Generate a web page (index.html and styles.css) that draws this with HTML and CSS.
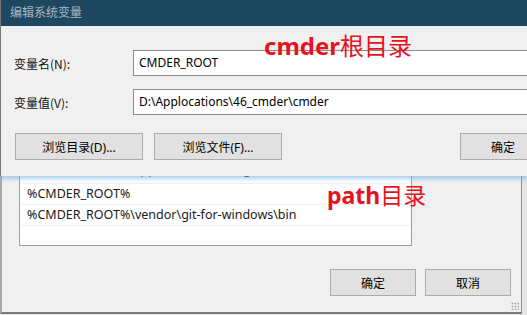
FILE: index.html
```html
<!DOCTYPE html>
<html lang="zh-CN">
<head>
<meta charset="utf-8">
<title>编辑系统变量</title>
<link rel="stylesheet" href="styles.css">
</head>
<body>
<div class="screen">
  <div class="win back">
    <div class="list">
      <div class="row empty"></div>
      <div class="row partial">%USERPROFILE%\AppData\Local\Programs\</div>
      <div class="row">%CMDER_ROOT%</div>
      <div class="row">%CMDER_ROOT%\vendor\git-for-windows\bin</div>
      <div class="row empty last"></div>
    </div>
    <div class="actions">
      <button class="btn">确定</button>
      <button class="btn">取消</button>
    </div>
    <div class="grip"></div>
  </div>

  <div class="win front">
    <div class="titlebar">编辑系统变量</div>
    <div class="body">
      <div class="field">
        <label class="lbl">变量名(N):</label>
        <div class="input">CMDER_ROOT</div>
      </div>
      <div class="field">
        <label class="lbl">变量值(V):</label>
        <div class="input">D:\Applocations\46_cmder\cmder</div>
      </div>
      <div class="btnrow">
        <button class="btn wide">浏览目录(D)...</button>
        <button class="btn wide">浏览文件(F)...</button>
        <button class="btn ok">确定</button>
      </div>
    </div>
  </div>

  <div class="note note-cmder"><span class="lat">cmder</span>根目录</div>
  <div class="note note-path"><span class="lat">path</span>目录</div>
</div>
</body>
</html>
```
FILE: styles.css
```css
* { box-sizing: border-box; }
html, body { margin: 0; padding: 0; }
body {
  width: 527px;
  height: 315px;
  overflow: hidden;
  background: #e6e6e6;
  font-family: "Noto Sans", "Noto Sans CJK SC", sans-serif;
  font-size: 12px;
  color: #000;
}
.screen {
  position: relative;
  width: 527px;
  height: 315px;
  overflow: hidden;
}
.win { position: absolute; }

/* back window: 编辑环境变量 */
.back {
  left: 0;
  top: 0;
  width: 522px;
  height: 314px;
  background: #f0f0f0;
  border-left: 2px solid #a9a9a9;
  border-right: 1px solid #8e8e8e;
  border-bottom: 2px solid #7a7a7a;
  display: flex;
  flex-direction: column;
}
.list {
  margin: 141px 0 0 17px;
  width: 393px;
  height: 105px;
  background: #fff;
  border: 1px solid #a0a0a0;
  display: flex;
  flex-direction: column;
  overflow: hidden;
}
.row {
  height: 21px;
  flex: 0 0 21px;
  line-height: 20px;
  padding-left: 7px;
  border-bottom: 1px solid #f0f0f0;
  font-size: 12.5px;
  white-space: nowrap;
  color: #1a1a1a;
}
.row.partial { line-height: 14px; }
.row.last { border-bottom: none; }
.actions {
  margin-top: 23px;
  display: flex;
  justify-content: flex-end;
  gap: 9px;
  padding-right: 10px;
}
.btn {
  height: 27px;
  width: 86px;
  background: #e1e1e1;
  border: 1px solid #adadad;
  font-family: "Noto Sans", "Noto Sans CJK SC", sans-serif;
  font-size: 12px;
  color: #000;
  padding: 0;
  margin: 0;
}
.grip {
  position: absolute;
  right: 2px;
  bottom: 2px;
  width: 8px;
  height: 8px;
  background: radial-gradient(circle, #b0b0b0 0.8px, transparent 1.2px) 0 0 / 3px 3px;
}

/* front window: 编辑系统变量 */
.front {
  left: 0;
  top: 0;
  width: 620px;
  height: 176px;
  background: #f0f0f0;
  border-left: 1px solid #777;
  box-shadow: 0 3px 4px rgba(120, 175, 230, 0.6);
  display: flex;
  flex-direction: column;
}
.titlebar {
  height: 26px;
  flex: 0 0 26px;
  background: #1e4862;
  color: #a7b6c1;
  font-family: "Noto Sans CJK SC", sans-serif;
  font-size: 12px;
  line-height: 24px;
  padding-left: 9px;
}
.body {
  padding: 24px 0 0 13px;
  display: flex;
  flex-direction: column;
  gap: 13px;
}
.field {
  display: flex;
  align-items: center;
}
.lbl {
  width: 119px;
  flex: 0 0 119px;
  font-family: "Noto Sans CJK SC", sans-serif;
  font-size: 12px;
  color: #111;
}
.input {
  width: 480px;
  height: 26px;
  border: 1px solid #8c8c8c;
  background: #fff;
  line-height: 24px;
  padding-left: 5px;
  font-size: 12px;
  white-space: nowrap;
}
.btnrow {
  display: flex;
  margin-top: 5px;
  padding-left: 1px;
  gap: 11px;
}
.btn.wide { width: 128px; }
.btn.ok { margin-left: 167px; width: 86px; }

/* red annotations */
.note {
  position: absolute;
  color: #e4141f;
  font-family: "Noto Sans CJK SC", sans-serif;
  font-size: 24px;
  line-height: 28px;
  white-space: nowrap;
}
.note .lat {
  font-family: "Noto Sans", sans-serif;
  font-weight: 700;
}
.note-cmder { left: 264px; top: 31px; }
.note-path { left: 327px; top: 180px; font-size: 23px; }
```
